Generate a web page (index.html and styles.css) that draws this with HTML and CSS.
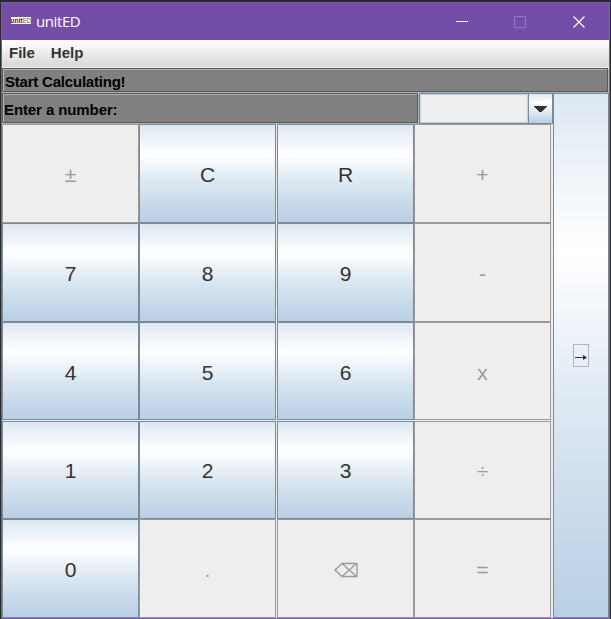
FILE: index.html
```
<!DOCTYPE html>
<html lang="en">
<head>
<meta charset="utf-8">
<title>unitED</title>
<link rel="stylesheet" href="styles.css">
</head>
<body>
<div class="window">
  <header class="titlebar">
    <span class="logo"><span>unit<i>ED</i></span></span>
    <span class="title">unitED</span>
    <svg class="controls" width="132" height="14" viewBox="0 0 132 14" fill="none">
      <path d="M0 6.500h12" stroke="#fff"/>
      <path d="M58.500 1.500h11v11h-11z" stroke="#9873bf"/>
      <path d="M117.500 1.500l11 11M128.500 1.500l-11 11" stroke="#fff" stroke-width="1.200"/>
    </svg>
  </header>
  <nav class="menubar"><span>File</span><span>Help</span></nav>
  <div class="label status"><span>Start Calculating!</span></div>
  <main class="body">
    <div class="left">
      <div class="entry">
        <div class="label prompt"><span>Enter a number:</span></div>
        <div class="combo">
          <div class="combo-value"></div>
          <div class="combo-arrow"><svg width="13" height="6" viewBox="0 0 13 6" shape-rendering="crispEdges"><path d="M0 0h13v1h-1v1h-1v1h-1v1h-1v1h-1v1h-3v-1h-1v-1h-1v-1h-1v-1h-1v-1h-1z" fill="#333"/></svg></div>
        </div>
      </div>
      <div class="keys">
        <button class="key" disabled>±</button><button class="key">C</button><button class="key">R</button><button class="key" disabled>+</button>
        <button class="key">7</button><button class="key">8</button><button class="key">9</button><button class="key" disabled>-</button>
        <button class="key">4</button><button class="key">5</button><button class="key">6</button><button class="key" disabled>x</button>
        <button class="key">1</button><button class="key">2</button><button class="key">3</button><button class="key" disabled>÷</button>
        <button class="key">0</button><button class="key" disabled>.</button><button class="key" disabled aria-label="Backspace"><svg class="erase" width="24" height="16" viewBox="0 0 24 16" fill="none" stroke="#999" stroke-width="1.300"><path d="M1 8L8 1.500H23V14.500H8zM8 1.500l14.500 13M8 14.500L22.500 1.500"/></svg></button><button class="key" disabled>=</button>
      </div>
    </div>
    <button class="convert"><span class="focus"><svg width="12" height="5" viewBox="0 0 12 5"><path d="M0 2h9v1H0z" fill="#333"/><path d="M8 0l4 2.500L8 5z" fill="#222"/></svg></span></button>
  </main>
</div>
</body>
</html>
```
FILE: styles.css
```
* { box-sizing: border-box; }
body {
  margin: 0;
  width: 611px;
  height: 619px;
  padding: 2px 1px 0;
  background: #2b2a2c;
  font-family: "Liberation Sans", Arial, sans-serif;
  overflow: hidden;
}
.window {
  width: 609px;
  height: 617px;
  border: 1px solid #8057ae;
  border-top: 0;
  background: #eee;
  display: flex;
  flex-direction: column;
}
.titlebar {
  flex: 0 0 38px;
  background: #744da9;
  border-top: 1px solid #8057ae;
  display: flex;
  align-items: center;
  padding-left: 9px;
  color: #fff;
}
.logo {
  width: 20px;
  height: 7px;
  background: #fff;
  color: #7c0a10;
  font-size: 6.5px;
  line-height: 7px;
  font-weight: bold;
  margin-bottom: 2px;
  display: flex;
  justify-content: center;
}
.logo i { color: #a89550; font-style: normal; }
.title {
  font-family: "Open Sans", "Noto Sans", sans-serif;
  font-size: 15px;
  letter-spacing: -0.4px;
  margin-left: 5px;
  margin-bottom: 1px;
}
.controls { margin-left: auto; margin-right: 21px; }
.menubar {
  flex: 0 0 28px;
  background: linear-gradient(#fff, #dadada 25px);
  border-bottom: 1px solid #eee;
  display: flex;
  gap: 16px;
  padding: 4px 7px 0;
  font-size: 15px;
  line-height: 18px;
  font-weight: bold;
  color: #333;
}
.label {
  background: #808080;
  border: 1px solid #595959;
  box-shadow: inset 1px 1px #b2b2b2, 1px 1px #b2b2b2;
  font-size: 15px;
  font-weight: bold;
  color: #000;
  display: flex;
  align-items: center;
  white-space: nowrap;
}
.status { flex: 0 0 24px; margin: 0 1px 1px 0; padding: 2px 0 0 2px; letter-spacing: -0.21px; }
.body { flex: 1; display: flex; min-height: 0; }
.left { width: 551px; display: flex; flex-direction: column; }
.entry { height: 31px; display: flex; }
.prompt { width: 416px; height: 30px; padding: 2px 0 0 1px; letter-spacing: -0.1px; }
.combo {
  width: 134px;
  height: 31px;
  margin-left: 1px;
  border: 1px solid #7a8a99;
  display: flex;
}
.combo-value { flex: 1; border: 1px solid #b8cfe5; }
.combo-arrow {
  width: 24px;
  border-left: 1px solid #7a8a99;
  background: linear-gradient(#dde8f3, #fff 30%, #b8cfe5);
  display: flex;
  align-items: center;
  justify-content: center;
}
.keys {
  display: grid;
  grid-template-columns: 137px 138px 137px 137px;
  grid-template-rows: 99px 99px 99px 98px 99px;
}
.key {
  width: 137px;
  margin: 0;
  padding: 2px 0 0;
  border: 1px solid #7a8a99;
  border-radius: 0;
  background: linear-gradient(#dde8f3, #fff 30%, #dae7f1 60%, #b8cfe5);
  font: 21px "Liberation Sans", Arial, sans-serif;
  color: #333;
}
.key:nth-child(n+9):nth-child(-n+12) { height: 98px; padding-top: 4px; }
.key:disabled { background: #eee; border-color: #999; color: #999; }
.erase { vertical-align: -1px; }
.convert {
  width: 56px;
  margin: 0;
  padding: 0;
  border: 1px solid #7a8a99;
  border-radius: 0;
  background: linear-gradient(#dde8f3, #fff 30%, #dde8f3 60%, #b8cfe5);
  display: flex;
  align-items: center;
  justify-content: center;
}
.focus {
  width: 16px;
  height: 23px;
  border: 1px solid #a3b8cc;
  display: flex;
  align-items: center;
  justify-content: center;
  padding-top: 4px;
}
```
